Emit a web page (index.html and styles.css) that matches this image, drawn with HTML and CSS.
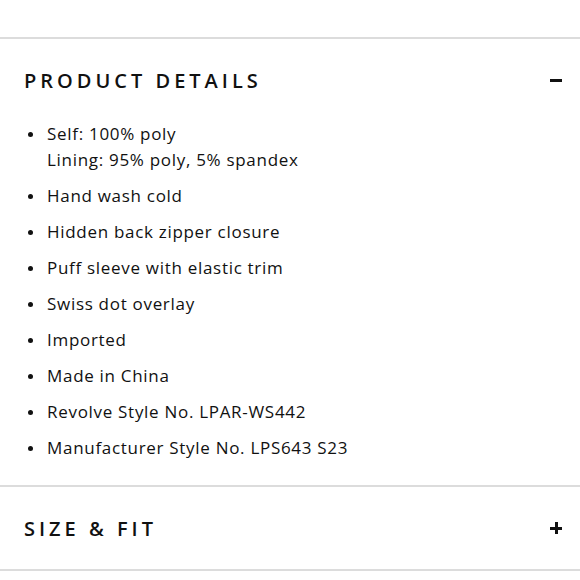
FILE: index.html
```html
<!DOCTYPE html>
<html>
<head>
<meta charset="utf-8">
<link rel="stylesheet" href="styles.css">
</head>
<body>
<div class="page">
  <section class="acc acc-open">
    <div class="acc-head">
      <h2 class="acc-title">PRODUCT DETAILS</h2>
      <span class="icon icon-minus"></span>
    </div>
    <ul class="details">
      <li>Self: 100% poly<br>Lining: 95% poly, 5% spandex</li>
      <li>Hand wash cold</li>
      <li>Hidden back zipper closure</li>
      <li>Puff sleeve with elastic trim</li>
      <li>Swiss dot overlay</li>
      <li>Imported</li>
      <li>Made in China</li>
      <li>Revolve Style No. LPAR-WS442</li>
      <li>Manufacturer Style No. LPS643 S23</li>
    </ul>
  </section>
  <section class="acc">
    <div class="acc-head">
      <h2 class="acc-title">SIZE &amp; FIT</h2>
      <span class="icon icon-plus"></span>
    </div>
  </section>
</div>
</body>
</html>
```
FILE: styles.css
```css
html, body {
  margin: 0;
  padding: 0;
  background: #fff;
}
.page {
  padding-top: 37px;
  font-family: "Open Sans", "DejaVu Sans", sans-serif;
  color: #111;
}
.acc {
  border-top: 2px solid #dcdcdc;
}
.acc:last-child {
  border-bottom: 2px solid #dcdcdc;
}
.acc-head {
  display: flex;
  align-items: center;
  justify-content: space-between;
  height: 82px;
  padding: 0 18px 0 24px;
}
.acc-title {
  margin: 0;
  font-size: 20px;
  font-weight: 600;
  letter-spacing: 4px;
  color: #111;
}
.icon {
  position: relative;
  width: 12px;
  height: 12px;
}
.icon::before, .icon::after {
  content: "";
  position: absolute;
  background: #111;
}
.icon::before {
  left: 0;
  top: 5px;
  width: 12px;
  height: 2.5px;
}
.icon-plus::after {
  left: 5px;
  top: 0;
  width: 2.5px;
  height: 12px;
}
.details {
  list-style: none;
  margin: 0;
  padding: 0 24px 24px 47px;
  display: flex;
  flex-direction: column;
  gap: 10px;
}
.details li {
  position: relative;
  font-size: 17px;
  line-height: 26px;
  letter-spacing: 0.7px;
}
.details li::before {
  content: "";
  position: absolute;
  left: -19px;
  top: 11px;
  width: 5px;
  height: 5px;
  border-radius: 50%;
  background: #111;
}
```
